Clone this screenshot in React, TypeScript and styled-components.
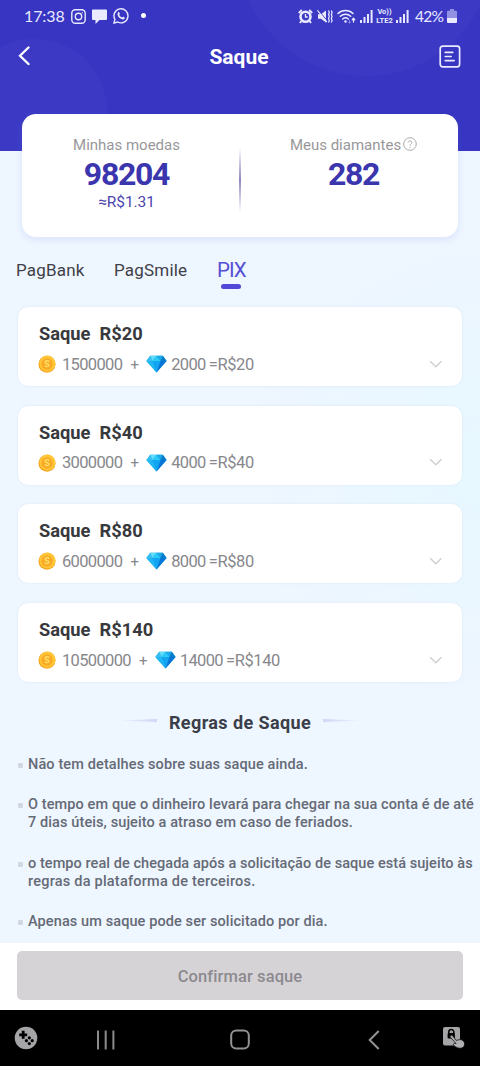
import React from 'react';
import styled, { createGlobalStyle } from 'styled-components';

const GlobalStyle = createGlobalStyle`
  * { box-sizing: border-box; }
  body { margin: 0; background: #000; }
  svg { display: block; flex: none; }
`;

const Screen = styled.div`
  width: 480px;
  height: 1066px;
  display: flex;
  flex-direction: column;
  overflow: hidden;
  font-family: Roboto, 'Liberation Sans', sans-serif;
  background: radial-gradient(circle at 100% 44%, rgba(230, 248, 255, 0.9) 0, rgba(230, 248, 255, 0) 230px), #eef6ff;
`;

const Header = styled.header`
  height: 151px;
  flex: none;
  color: #fff;
  background:
    radial-gradient(circle at 34px 112px, #3c3ac5 72px, rgba(60, 58, 197, 0) 74px),
    radial-gradient(circle at 366px -52px, #3c3ac5 127px, rgba(60, 58, 197, 0) 129px),
    #3735c1;
`;

const StatusBar = styled.div`
  height: 32px;
  padding: 0 23px 0 24px;
  display: flex;
  align-items: center;
  justify-content: space-between;
  color: #e9eaff;
`;

const StatusGroup = styled.div<{ $gap: number }>`
  display: flex;
  align-items: center;
  gap: ${p => p.$gap}px;
`;

const Clock = styled.span`
  font: 400 16px/20px Lato, sans-serif;
  letter-spacing: -0.1px;
  width: 41px;
  white-space: nowrap;
`;

const Battery = styled.span`
  font: 400 15.5px/20px Lato, sans-serif;
  width: 28px;
  margin-left: 2px;
  white-space: nowrap;
  letter-spacing: -0.7px;
`;

const Lte = styled.span`
  display: flex;
  flex-direction: column;
  align-items: center;
  width: 19px;
  margin: 0 -2px;
  font-size: 7.5px;
  font-weight: 700;
  line-height: 9px;
  white-space: nowrap;
`;

const TitleBar = styled.div`
  height: 48px;
  padding: 0 19px 0 17px;
  display: grid;
  grid-template-columns: 60px 1fr 60px;
  align-items: center;

  svg:last-child { justify-self: end; }
`;

const Title = styled.h1`
  margin: 0;
  padding-top: 1px;
  text-align: center;
  font-size: 21px;
  font-weight: 700;
  line-height: 26px;
`;

const Balance = styled.section`
  height: 123px;
  margin: -37px 22px 0;
  flex: none;
  border-radius: 14px;
  background: #fff;
  box-shadow: 0 3px 7px rgba(120, 140, 225, 0.17);
  display: grid;
  grid-template-columns: 209px 18px 209px;
`;

const BalanceColumn = styled.div`
  padding-top: 21px;
  display: flex;
  flex-direction: column;
  align-items: center;
`;

const BalanceLabel = styled.div`
  display: flex;
  align-items: center;
  gap: 2px;
  height: 20px;
  font-size: 15px;
  letter-spacing: 0;
  color: #99979b;
  white-space: nowrap;

  svg { margin-bottom: 3px; }
`;

const BalanceValue = styled.div`
  height: 40px;
  font-size: 32px;
  font-weight: 700;
  line-height: 39px;
  letter-spacing: -1.3px;
  color: #3b36ae;
`;

const BalanceNote = styled.div`
  margin-top: -3px;
  font-size: 15.5px;
  line-height: 20px;
  letter-spacing: -0.1px;
  color: #4d45ab;
`;

const Divider = styled.div`
  width: 2px;
  height: 64px;
  margin: 34px 0 0 8px;
  background: linear-gradient(#fff, #8c88c4 50%, #fff);
`;

const Tabs = styled.nav`
  height: 70px;
  flex: none;
  padding: 21px 0 0 16px;
  display: flex;
  align-items: flex-start;
`;

const Tab = styled.div<{ $active?: boolean; $width: number }>`
  width: ${p => p.$width}px;
  display: flex;
  flex-direction: column;
  gap: 2px;
  font-size: ${p => (p.$active ? 20.5 : 17)}px;
  font-weight: 400;
  line-height: 24px;
  letter-spacing: ${p => (p.$active ? -1 : 0.2)}px;
  color: ${p => (p.$active ? '#5650d4' : '#3f4047')};

  &::after {
    content: '';
    display: ${p => (p.$active ? 'block' : 'none')};
    width: 20px;
    height: 5px;
    margin-left: 4px;
    border-radius: 3px;
    background: #5148d8;
  }
`;

const Options = styled.div`
  padding: 0 18px;
  flex: none;
  display: flex;
  flex-direction: column;
  gap: 19.7px;
`;

const OptionCard = styled.article`
  height: 79px;
  padding: 15px 19px 0 20px;
  border-radius: 10px;
  background: #fff;
  box-shadow: 0 0 2px rgba(130, 160, 220, 0.22);
`;

const OptionTitle = styled.h2`
  margin: 0 0 0 1px;
  font-size: 18.3px;
  font-weight: 700;
  line-height: 24px;
  letter-spacing: 0;
  word-spacing: 4.5px;
  color: #38393d;
`;

const OptionDetail = styled.div`
  height: 20px;
  margin-top: 8px;
  display: flex;
  align-items: center;
  font-size: 16.5px;
  line-height: 20px;
  letter-spacing: -0.65px;
  color: #87878c;
  white-space: nowrap;

  span { padding-top: 1px; }
  svg:last-child { margin-left: auto; }
`;

const CoinAmount = styled.span`
  margin-left: 6px;
`;

const Plus = styled.span`
  margin: 0 8px 0 8px;
  font-size: 15px;
`;

const GemAmount = styled.span`
  margin-left: 4px;
`;

const Result = styled.span`
  margin-left: 3px;
  letter-spacing: -0.4px;
`;

const RulesTitle = styled.h2`
  height: 28px;
  margin: 26px 0 0;
  flex: none;
  display: flex;
  align-items: center;
  justify-content: center;
  gap: 12px;
  font-size: 18px;
  font-weight: 700;
  letter-spacing: 0.4px;
  color: #3b3e49;
`;

const Flourish = styled.i<{ $flip?: boolean }>`
  width: 36px;
  height: 3px;
  margin-top: -3px;
  background: linear-gradient(to ${p => (p.$flip ? 'left' : 'right')}, rgba(214, 216, 247, 0.3), #d3d5f6);
  clip-path: ${p => (p.$flip ? 'polygon(0 0, 100% 50%, 0 100%)' : 'polygon(0 50%, 100% 0, 100% 100%)')};
`;

const Rules = styled.ul`
  flex: 1 1 0;
  min-height: 0;
  margin: 0;
  padding: 20px 0 0 18px;
  list-style: none;
`;

const Rule = styled.li`
  display: flex;
  gap: 5px;
  margin-bottom: 22.3px;
  font-size: 14.5px;
  font-weight: 500;
  line-height: 18px;
  white-space: nowrap;
  color: #656a76;

  &::before {
    content: '';
    flex: none;
    width: 5px;
    height: 5px;
    margin-top: 7px;
    border-radius: 1px;
    background: #d3d8e0;
  }
`;

const RuleLine = styled.div<{ $tracking: number }>`
  letter-spacing: ${p => p.$tracking}px;
`;

const Footer = styled.footer`
  height: 67px;
  flex: none;
  padding: 8px 17px 10px;
  background: #fff;
`;

const Confirm = styled.button`
  width: 100%;
  height: 49px;
  border: 0;
  padding: 2px 0 0;
  border-radius: 5px;
  background: #d5d3d6;
  color: #8c8a8f;
  font: 500 16.5px/24px Roboto, sans-serif;
  letter-spacing: 0.1px;
`;

const NavBar = styled.div`
  height: 56px;
  flex: none;
  background: #000;
  padding: 3px 15px 0 14px;
  display: grid;
  grid-template-columns: 82px 134px 138px 74px 23px;
  align-items: center;

  svg:first-child, svg:last-child { margin-bottom: 4px; }
`;

const Alarm = () => (
  <svg width="15" height="15" viewBox="0 0 15 15" fill="none" stroke="currentColor">
    <circle cx="7.5" cy="7.8" r="5" strokeWidth="2.6" />
    <path d="M7.5 5v3h2.2" strokeWidth="1.3" />
    <path d="M.8 4 3.8 1M14.2 4l-3-3M3.5 12l-1.6 2M11.5 12l1.6 2" strokeWidth="1.9" />
  </svg>
);

const Vibrate = () => (
  <svg width="16" height="15" viewBox="0 0 16 15" fill="none" stroke="currentColor">
    <path d="M1 5.2h3L9 1.5v12L4 9.7H1z" fill="currentColor" stroke="none" />
    <path d="M1.2.8 10.8 12.5" stroke="#3735c1" strokeWidth="1" />
    <path d="M.4 1.4 9.8 13" strokeWidth="1.2" />
    <path d="m11.500 1.500.8 2-.8 2 .8 2-.8 2 .8 2-.8 2M14.300 1.500l.8 2-.8 2 .8 2-.8 2 .8 2-.8 2" strokeWidth="1.200" />
  </svg>
);

const Wifi = () => (
  <svg width="19" height="15" viewBox="0 0 19 15" fill="none" stroke="currentColor" strokeLinecap="round">
    <path d="M1 4.500C5 .4 12 .4 16 4.500M3.300 7.300c3-2.800 7.400-2.800 10.400 0M5.700 10c1.800-1.500 3.800-1.500 5.600 0" strokeWidth="1.500" />
    <circle cx="8.500" cy="12.500" r="1.200" fill="currentColor" stroke="none" />
    <path d="m12.500 11.500 0 2.500m-1-1 1 1 1-1" strokeWidth=".7" opacity=".6" />
    <path d="M16.500 13V9.500m-1.200 1.200 1.200-1.400 1.200 1.400" strokeWidth="1.300" />
  </svg>
);

const Signal = () => (
  <svg width="13" height="14" viewBox="0 0 13 14" fill="currentColor">
    <path d="M0 11h2v3H0zM3.500 8h2v6h-2zM7 5h2v9H7zM10.600 1h2v13h-2z" />
  </svg>
);

const BatteryIcon = () => (
  <svg width="10" height="15" viewBox="0 0 10 15" fill="currentColor">
    <path d="M3 0h4v1.700h2a1 1 0 0 1 1 1V9H0V2.700a1 1 0 0 1 1-1h2z" opacity=".5" />
    <path d="M0 9h10v4a1 1 0 0 1-1 1H1a1 1 0 0 1-1-1z" />
  </svg>
);

const Instagram = () => (
  <svg width="15" height="15" viewBox="0 0 15 15" fill="none" stroke="currentColor" strokeWidth="1.400">
    <rect x=".8" y=".8" width="13.400" height="13.400" rx="3.500" />
    <circle cx="7.500" cy="7.500" r="3.200" />
    <circle cx="11.300" cy="3.700" r=".6" fill="currentColor" stroke="none" />
  </svg>
);

const Bubble = () => (
  <svg width="15" height="15" viewBox="0 0 15 15" fill="currentColor">
    <path d="M1 .5h13a1 1 0 0 1 1 1v8.500a1 1 0 0 1-1 1H7.500L3.500 15v-4H1a1 1 0 0 1-1-1V1.500a1 1 0 0 1 1-1z" />
  </svg>
);

const WhatsApp = () => (
  <svg width="16" height="16" viewBox="0 0 16 16" fill="none" stroke="currentColor" strokeWidth="1.400">
    <path d="m.9 15.200 1-3.900A7 7 0 1 1 4.700 14z" strokeLinejoin="round" />
    <path d="M5.300 4.200c.7-.4 1 .1 1.500 1.400.2.500-.5.800-.5 1.200.5 1.300 1.500 2.200 2.800 2.700.5 0 .8-.9 1.200-.7 1.500.7 1.700.8 1.300 1.700-.9 1.400-2.900 1-4.700-.3C4.700 8.600 3.800 5.600 5.300 4.200z" fill="currentColor" stroke="none" />
  </svg>
);

const Dot = () => (
  <svg width="6" height="6" viewBox="0 0 6 6"><circle cx="2.500" cy="2.500" r="2.500" fill="#fff" /></svg>
);

const BackArrow = () => (
  <svg width="14" height="20" viewBox="0 0 14 20" fill="none" stroke="#fff" strokeWidth="2.300" strokeLinecap="round">
    <path d="M11.500 1.500 3 9.800l8.500 8.200" />
  </svg>
);

const Records = () => (
  <svg width="22" height="23" viewBox="0 0 22 23" fill="none" stroke="#e9eaff" strokeLinecap="round">
    <rect x="1.200" y="1.200" width="19.400" height="20.600" rx="2.500" strokeWidth="1.700" />
    <path d="M6.200 7.400h7.600M6.200 11.500h6M6.200 15.600h9" strokeWidth="1.600" />
  </svg>
);

const Help = () => (
  <svg width="14" height="14" viewBox="0 0 14 14" fill="none" stroke="#aaa8ac" strokeWidth="1">
    <circle cx="7" cy="7" r="6.300" />
    <path d="M5.200 5.600c0-2.300 3.700-2.300 3.700 0C8.900 6.900 7 7 7 8.600M7 9.800v1" />
  </svg>
);

const Coin = () => (
  <svg width="18" height="18" viewBox="0 0 18 18">
    <circle cx="9" cy="9.300" r="8.500" fill="#f5a21c" />
    <circle cx="9.400" cy="8.600" r="8" fill="#ffc638" />
    <circle cx="9" cy="9" r="5.700" fill="#fbaa25" />
    <path d="M11.300 6.700C10 5.200 6.900 5.700 7.200 7.500c.3 1.500 3.700.9 3.700 2.600 0 1.600-2.800 1.800-4 .4" fill="none" stroke="#ffdc62" strokeWidth="1.500" />
  </svg>
);

const Gem = () => (
  <svg width="21" height="18" viewBox="0 0 21 18">
    <path d="M4.200.8h12.600L20.600 6 10.500 17.500.4 6z" fill="#19a8ee" />
    <path d="M4.200.8 6.500 6H.4z" fill="#38bdf2" />
    <path d="m4.200.8 6.300 0L6.500 6z" fill="#64dcfa" />
    <path d="M10.500.8 14.500 6h-8z" fill="#2ccbf7" />
    <path d="m10.500.8 6.300 0L14.500 6z" fill="#1ba9e8" />
    <path d="M16.800.8 20.600 6h-6.100z" fill="#087cc9" />
    <path d="M.4 6h6.100l4 11.500z" fill="#21b7f3" />
    <path d="M6.500 6h8l-4 11.500z" fill="#12a5f2" />
    <path d="M14.500 6h6.100L10.500 17.500z" fill="#0875d8" />
  </svg>
);

const Chevron = () => (
  <svg width="14" height="9" viewBox="0 0 14 9" fill="none" stroke="#cfcfd3" strokeWidth="1.400">
    <path d="m1.200 1.200 5.600 5.600 5.600-5.600" />
  </svg>
);

const Gamepad = () => (
  <svg width="24" height="24" viewBox="0 0 24 24">
    <circle cx="12" cy="12" r="11.300" fill="#a5a4a6" />
    <path d="M9.200 4.800v8M5.200 8.800h8" stroke="#000" strokeWidth="2.800" />
    <g fill="#000">
      <circle cx="15.300" cy="11.800" r="1.600" />
      <circle cx="12.400" cy="14.700" r="1.600" />
      <circle cx="18.200" cy="14.700" r="1.600" />
      <circle cx="15.300" cy="17.600" r="1.600" />
    </g>
  </svg>
);

const Recents = () => (
  <svg width="20" height="20" viewBox="0 0 20 20" stroke="#8b8a8c" strokeWidth="2">
    <path d="M2 .5v19M9.700.5v19M17.400.5v19" />
  </svg>
);

const Home = () => (
  <svg width="20" height="21" viewBox="0 0 20 21" fill="none" stroke="#939294" strokeWidth="2">
    <rect x="1.200" y="1.500" width="17.600" height="18" rx="5" />
  </svg>
);

const NavBack = () => (
  <svg width="12" height="20" viewBox="0 0 12 20" fill="none" stroke="#939294" strokeWidth="2">
    <path d="M10.700 1 1.700 10l9 9" />
  </svg>
);

const TouchLock = () => (
  <svg width="23" height="23" viewBox="0 0 23 23">
    <rect x="1" y="1" width="17" height="18.500" rx="2" fill="#a5a4a6" />
    <path d="M6.800 7.500V6a2.500 2.500 0 0 1 5 0v1.500" fill="none" stroke="#000" strokeWidth="1.500" />
    <rect x="5.600" y="7" width="7.300" height="5.500" rx="1" fill="#000" />
    <path d="M8.400 9.600c.8-.7 1.900-.5 2.500.3l3.100 4.500 3.800-.8c2-.2 4.300 1.700 4.700 3.400.3 2.400-.6 4.400-2.700 5-3.100.7-5.600-.4-8-2.500-.8-.8-.4-2 .8-2.100l1.500.1-5.500-6c-.6-.6-.7-1.300-.2-1.900z" fill="#b0afb1" stroke="#000" strokeWidth=".7" />
  </svg>
);

const options = [
  { value: '20', coins: '1500000', gems: '2000' },
  { value: '40', coins: '3000000', gems: '4000' },
  { value: '80', coins: '6000000', gems: '8000' },
  { value: '140', coins: '10500000', gems: '14000' },
];

const rules = [
  [{ text: 'Não tem detalhes sobre suas saque ainda.', tracking: 0.12 }],
  [
    { text: 'O tempo em que o dinheiro levará para chegar na sua conta é de até', tracking: 0.1 },
    { text: '7 dias úteis, sujeito a atraso em caso de feriados.', tracking: 0.1 },
  ],
  [
    { text: 'o tempo real de chegada após a solicitação de saque está sujeito às', tracking: 0.06 },
    { text: 'regras da plataforma de terceiros.', tracking: 0.22 },
  ],
  [{ text: 'Apenas um saque pode ser solicitado por dia.', tracking: 0.1 }],
];

export default function App() {
  return (
    <Screen>
      <GlobalStyle />
      <Header>
        <StatusBar>
          <StatusGroup $gap={6}>
            <Clock>17:38</Clock>
            <Instagram />
            <Bubble />
            <WhatsApp />
            <span />
            <Dot />
          </StatusGroup>
          <StatusGroup $gap={4}>
            <Alarm />
            <Vibrate />
            <Wifi />
            <Signal />
            <Lte><span>Vo))</span><span>LTE2</span></Lte>
            <Signal />
            <Battery>42%</Battery>
            <BatteryIcon />
          </StatusGroup>
        </StatusBar>
        <TitleBar>
          <BackArrow />
          <Title>Saque</Title>
          <Records />
        </TitleBar>
      </Header>
      <Balance>
        <BalanceColumn>
          <BalanceLabel>Minhas moedas</BalanceLabel>
          <BalanceValue>98204</BalanceValue>
          <BalanceNote>≈R$1.31</BalanceNote>
        </BalanceColumn>
        <Divider />
        <BalanceColumn>
          <BalanceLabel>Meus diamantes<Help /></BalanceLabel>
          <BalanceValue>282</BalanceValue>
        </BalanceColumn>
      </Balance>
      <Tabs>
        <Tab $width={98}>PagBank</Tab>
        <Tab $width={103}>PagSmile</Tab>
        <Tab $width={60} $active>PIX</Tab>
      </Tabs>
      <Options>
        {options.map(o => (
          <OptionCard key={o.value}>
            <OptionTitle>Saque R${o.value}</OptionTitle>
            <OptionDetail>
              <Coin />
              <CoinAmount>{o.coins}</CoinAmount>
              <Plus>+</Plus>
              <Gem />
              <GemAmount>{o.gems}</GemAmount>
              <Result>=R${o.value}</Result>
              <Chevron />
            </OptionDetail>
          </OptionCard>
        ))}
      </Options>
      <RulesTitle><Flourish />Regras de Saque<Flourish $flip /></RulesTitle>
      <Rules>
        {rules.map(lines => (
          <Rule key={lines[0].text}>
            <div>
              {lines.map(l => <RuleLine key={l.text} $tracking={l.tracking}>{l.text}</RuleLine>)}
            </div>
          </Rule>
        ))}
      </Rules>
      <Footer><Confirm>Confirmar saque</Confirm></Footer>
      <NavBar>
        <Gamepad />
        <Recents />
        <Home />
        <NavBack />
        <TouchLock />
      </NavBar>
    </Screen>
  );
}
